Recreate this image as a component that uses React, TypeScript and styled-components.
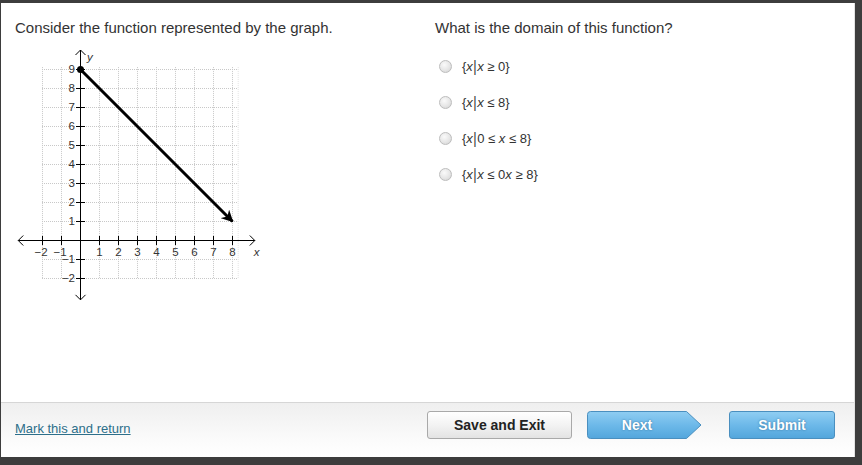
import React from "react";
import styled, { createGlobalStyle } from "styled-components";

const Global = createGlobalStyle`
  html, body { margin: 0; padding: 0; }
  body {
    background: #3d3d3d;
    font-family: "Liberation Sans", Arial, sans-serif;
    width: 862px;
    height: 465px;
    overflow: hidden;
  }
`;

const Panel = styled.div`
  box-sizing: border-box;
  margin: 3px 7px 0 1px;
  width: 854px;
  height: 454px;
  background: #ffffff;
  border-right: 1px solid #e2e2e2;
  display: flex;
  flex-direction: column;
`;

const Content = styled.div`
  flex: 1;
  display: grid;
  grid-template-columns: 420px 1fr;
  padding: 16px 0 0 14px;
`;

const Column = styled.div`
  display: flex;
  flex-direction: column;
`;

const Prompt = styled.div`
  font-size: 15px;
  line-height: 18px;
  color: #333333;
`;

const GraphSvg = styled.svg`
  display: block;
  margin-top: 7px;
  margin-left: -1px;
  overflow: visible;
`;

const OptionList = styled.div`
  display: flex;
  flex-direction: column;
  margin-top: 11px;
`;

const OptionRow = styled.label`
  display: flex;
  align-items: center;
  height: 36px;
  gap: 10px;
  font-size: 13px;
  color: #333333;
`;

const Radio = styled.span`
  box-sizing: border-box;
  width: 13px;
  height: 13px;
  margin-left: 4px;
  border-radius: 50%;
  border: 1px solid #bdbdbd;
  background: radial-gradient(circle at 40% 35%, #fafafa 0%, #e6e6e6 55%, #cfcfcf 100%);
`;

const MathText = styled.span`
  font-family: "Liberation Sans", Arial, sans-serif;
  white-space: pre;
  i { font-style: italic; }
`;

const Bar = styled.span`
  display: inline-block;
  transform: scaleY(1.25);
  margin: 0 0.5px;
`;

const Footer = styled.div`
  box-sizing: border-box;
  height: 55px;
  border-top: 1px solid #d6d6d6;
  background: linear-gradient(to bottom, #efefef 0%, #fbfbfb 70%, #ffffff 100%);
  display: flex;
  align-items: center;
  padding: 0 19px 10px 14px;
`;

const MarkLink = styled.a`
  font-size: 13px;
  color: #2d6f8a;
  text-decoration: underline;
  margin-top: 6px;
  cursor: pointer;
`;

const Buttons = styled.div`
  margin-left: auto;
  display: flex;
  align-items: center;
  gap: 15px;
`;

const GrayButton = styled.button`
  box-sizing: border-box;
  width: 145px;
  height: 28px;
  border: 1px solid #a9a9a9;
  border-radius: 3px;
  background: linear-gradient(to bottom, #ffffff 0%, #f3f3f3 50%, #e3e3e3 100%);
  font-family: "Liberation Sans", Arial, sans-serif;
  font-weight: bold;
  font-size: 14px;
  color: #222222;
  padding: 0;
`;

const BlueButton = styled.button`
  box-sizing: border-box;
  width: 106px;
  height: 28px;
  border: 1px solid #4a8fbf;
  border-radius: 3px;
  background: linear-gradient(to bottom, #8fcdf2 0%, #6db9e9 50%, #53a6dc 100%);
  font-family: "Liberation Sans", Arial, sans-serif;
  font-weight: bold;
  font-size: 14px;
  color: #ffffff;
  text-shadow: 0 0 2px rgba(30, 80, 120, 0.7);
  padding: 0;
  margin-left: 12px;
`;

const NextWrap = styled.button`
  position: relative;
  width: 115px;
  height: 28px;
  border: none;
  background: transparent;
  padding: 0 15px 0 0;
  font-family: "Liberation Sans", Arial, sans-serif;
  font-weight: bold;
  font-size: 14px;
  color: #ffffff;
  text-shadow: 0 0 2px rgba(30, 80, 120, 0.7);
`;

const NextShape = styled.svg`
  position: absolute;
  left: 0;
  top: 0;
`;

const NextLabel = styled.span`
  position: relative;
`;

const U = 19;
const OX = 66;
const OY = 196;
const X = (u: number) => OX + U * u;
const Y = (v: number) => OY - U * v;

const Graph: React.FC = () => {
  const xs = [-2, -1, 0, 1, 2, 3, 4, 5, 6, 7, 8];
  const ys = [-2, -1, 0, 1, 2, 3, 4, 5, 6, 7, 8, 9];
  const grid = "#c8c8c8";
  const lab = { fontSize: 11.5, fill: "#333", fontFamily: "Liberation Sans, Arial, sans-serif" } as const;
  const ax0 = X(-3.25), ax1 = X(9.2), ay0 = Y(10), ay1 = Y(-3.15);
  return (
    <GraphSvg width={250} height={262} viewBox="0 0 250 262">
      <defs>
        <marker id="ah" viewBox="0 0 10 10" refX="9" refY="5" markerWidth="4" markerHeight="4" orient="auto">
          <path d="M0,0 L10,5 L0,10 L3,5 Z" fill="#000" />
        </marker>
      </defs>
      {xs.map((u) => (
        <line key={"gv" + u} x1={X(u) + 0.5} x2={X(u) + 0.5} y1={Y(9.1)} y2={Y(-2)} stroke={grid} strokeWidth={1} strokeDasharray="1 1" />
      ))}
      <line x1={X(8.3) + 0.5} x2={X(8.3) + 0.5} y1={Y(9.1)} y2={Y(-2)} stroke="#e2e2e2" strokeWidth={1} strokeDasharray="1 1" />
      {ys.map((v) => (
        <line key={"gh" + v} y1={Y(v) + 0.5} y2={Y(v) + 0.5} x1={X(-2)} x2={X(8.3)} stroke={grid} strokeWidth={1} strokeDasharray="1 1" />
      ))}
      <line x1={ax0} x2={ax1} y1={OY + 0.5} y2={OY + 0.5} stroke="#000" strokeWidth={1} />
      <line x1={OX + 0.5} x2={OX + 0.5} y1={ay0} y2={ay1} stroke="#000" strokeWidth={1} />
      <polyline points={`${ax0 + 5},${OY - 4.5} ${ax0},${OY + 0.5} ${ax0 + 5},${OY + 5.5}`} fill="none" stroke="#000" strokeWidth={1} />
      <polyline points={`${ax1 - 5},${OY - 4.5} ${ax1},${OY + 0.5} ${ax1 - 5},${OY + 5.5}`} fill="none" stroke="#000" strokeWidth={1} />
      <polyline points={`${OX - 4.5},${ay0 + 5} ${OX + 0.5},${ay0} ${OX + 5.5},${ay0 + 5}`} fill="none" stroke="#000" strokeWidth={1} />
      <polyline points={`${OX - 4.5},${ay1 - 5} ${OX + 0.5},${ay1} ${OX + 5.5},${ay1 - 5}`} fill="none" stroke="#000" strokeWidth={1} />
      {xs.filter((u) => u !== 0).map((u) => (
        <line key={"tx" + u} x1={X(u) + 0.5} x2={X(u) + 0.5} y1={OY - 4} y2={OY + 5} stroke="#000" strokeWidth={1} />
      ))}
      {ys.filter((v) => v !== 0).map((v) => (
        <line key={"ty" + v} y1={Y(v) + 0.5} y2={Y(v) + 0.5} x1={OX - 4} x2={OX + 5} stroke="#000" strokeWidth={1} />
      ))}
      {xs.filter((u) => u !== 0).map((u) => (
        <text key={"lx" + u} x={X(u) + (u < 0 ? -1 : 0.5)} y={OY + 16} textAnchor="middle" {...lab}>
          {u < 0 ? "\u2212" + Math.abs(u) : u}
        </text>
      ))}
      {ys.filter((v) => v !== 0).map((v) => (
        <text key={"ly" + v} x={OX - 5} y={Y(v) + 4} textAnchor="end" {...lab}>
          {v < 0 ? "\u2212" + Math.abs(v) : v}
        </text>
      ))}
      <text x={OX + 7} y={Y(10) + 11} {...lab} fontStyle="italic">y</text>
      <text x={X(9.15)} y={OY + 16} {...lab} fontStyle="italic">x</text>
      <line x1={X(0) + 0.5} y1={Y(9) + 0.5} x2={X(8) + 0.5} y2={Y(1) + 0.5} stroke="#000" strokeWidth={3} markerEnd="url(#ah)" />
      <circle cx={X(0) + 0.5} cy={Y(9) + 0.5} r={3.5} fill="#000" />
    </GraphSvg>
  );
};

type Part = string | { i: string } | { bar: true };
const x: Part = { i: "x" };
const bar: Part = { bar: true };

const options: Part[][] = [
  ["{", x, bar, x, " \u2265 0}"],
  ["{", x, bar, x, " \u2264 8}"],
  ["{", x, bar, "0 \u2264 ", x, " \u2264 8}"],
  ["{", x, bar, x, " \u2264 0", x, " \u2265 8}"],
];

const renderParts = (parts: Part[]) =>
  parts.map((p, k) => {
    if (typeof p === "string") return <span key={k}>{p}</span>;
    if ("i" in p) return <i key={k}>{p.i}</i>;
    return <Bar key={k}>|</Bar>;
  });

export default function App() {
  return (
    <>
      <Global />
      <Panel>
        <Content>
          <Column>
            <Prompt>Consider the function represented by the graph.</Prompt>
            <Graph />
          </Column>
          <Column>
            <Prompt>What is the domain of this function?</Prompt>
            <OptionList>
              {options.map((o, k) => (
                <OptionRow key={k}>
                  <Radio />
                  <MathText>{renderParts(o)}</MathText>
                </OptionRow>
              ))}
            </OptionList>
          </Column>
        </Content>
        <Footer>
          <MarkLink>Mark this and return</MarkLink>
          <Buttons>
            <GrayButton>Save and Exit</GrayButton>
            <NextWrap>
              <NextShape width={115} height={28} viewBox="0 0 115 28">
                <defs>
                  <linearGradient id="ng" x1="0" y1="0" x2="0" y2="1">
                    <stop offset="0" stopColor="#8fcdf2" />
                    <stop offset="0.5" stopColor="#6db9e9" />
                    <stop offset="1" stopColor="#53a6dc" />
                  </linearGradient>
                </defs>
                <path d="M3.5,0.5 L99.5,0.5 L114,14 L99.5,27.5 L3.5,27.5 Q0.5,27.5 0.5,24.5 L0.5,3.5 Q0.5,0.5 3.5,0.5 Z" fill="url(#ng)" stroke="#4a8fbf" strokeWidth={1} />
              </NextShape>
              <NextLabel>Next</NextLabel>
            </NextWrap>
            <BlueButton>Submit</BlueButton>
          </Buttons>
        </Footer>
      </Panel>
    </>
  );
}
